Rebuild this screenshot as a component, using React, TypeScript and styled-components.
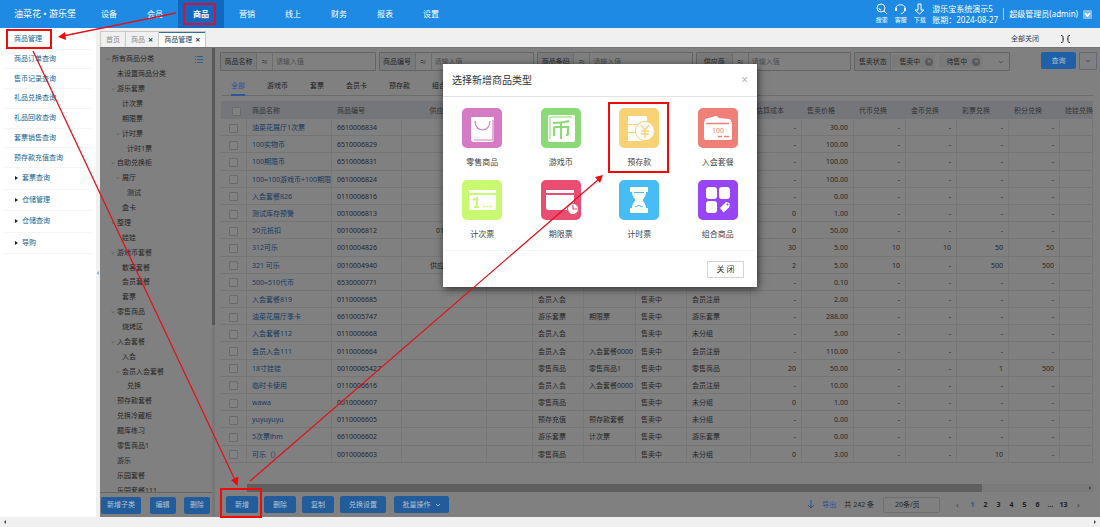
import React from "react";
import styled, { createGlobalStyle } from "styled-components";

const Global = createGlobalStyle`
  *, *::before, *::after { box-sizing: border-box; }
  html, body, #root { height: 100%; }
  body { margin: 0; background: #fff; font: 7px/10px "Noto Sans", "Noto Sans CJK SC", sans-serif; color: #262626; }
  button, input, select { font: inherit; color: inherit; margin: 0; padding: 0; }
  button { border: 0; background: none; white-space: nowrap; cursor: pointer; }
  ul { list-style: none; margin: 0; padding: 0; }
  a { color: inherit; text-decoration: none; white-space: nowrap; }
  svg { display: block; flex: none; }
`;

const Page = styled.div`
  position: relative;
  height: 100vh;
  display: flex;
  flex-direction: column;
  overflow: hidden;
`;

/* ---------- top bar ---------- */
const TopBar = styled.header`
  flex: none;
  height: 28px;
  display: flex;
  align-items: center;
  background: #1e8ae3;
  color: #fff;
  white-space: nowrap;
`;
const Brand = styled.div`
  width: 86px;
  padding-left: 14px;
  font-size: 9px;
`;
const Nav = styled.nav`
  display: flex;
  align-self: stretch;
`;
const NavLink = styled.a<{ $active?: boolean }>`
  width: 46px;
  display: flex;
  align-items: center;
  justify-content: center;
  font-size: 8px;
  font-weight: ${(p) => (p.$active ? 700 : 400)};
  background: ${(p) => (p.$active ? "#1069c0" : "transparent")};
`;
const TopRight = styled.div`
  margin-left: auto;
  padding-right: 8px;
  display: flex;
  align-items: center;
`;
const Tool = styled.button`
  width: 19px;
  display: flex;
  flex-direction: column;
  align-items: center;
  gap: 1px;
  font-size: 6px;
  line-height: 9px;
`;
const Account = styled.div`
  margin-left: 3px;
  width: 71px;
  font-size: 8px;
  line-height: 11px;
`;
const User = styled.button`
  display: flex;
  align-items: center;
  gap: 5px;
  height: 12px;
  padding-left: 5px;
  border-left: 1px solid #a5d0f5;
  font-size: 8px;
`;

/* ---------- body frame ---------- */
const Body = styled.div`
  flex: 1;
  min-height: 0;
  display: flex;
`;
const Side = styled.aside`
  flex: none;
  width: 96px;
  padding: 2px 5px 0;
  background: #fff;
`;
const SideList = styled.ul<{ $height: number }>`
  display: grid;
  grid-auto-rows: 1fr;
  height: ${(p) => p.$height}px;
`;
const SideItem = styled.li`
  display: flex;
  align-items: center;
  gap: 4px;
  padding-left: 9px;
  border-bottom: 1px solid #f4f4f4;
  color: #14638f;
`;
const Caret = styled.span`
  width: 0;
  height: 0;
  margin-left: 1px;
  border-left: 3px solid #222;
  border-top: 2px solid transparent;
  border-bottom: 2px solid transparent;
`;
const Splitter = styled.button`
  flex: none;
  width: 4px;
  background: #f0f0f0;
  display: flex;
  align-items: center;
  justify-content: center;
  color: #444;
`;
const Content = styled.div`
  flex: 1;
  min-width: 0;
  display: flex;
  flex-direction: column;
`;
const TabBar = styled.div`
  flex: none;
  height: 19px;
  display: flex;
  align-items: flex-end;
  background: #f0f0f0;
`;
const PageTab = styled.div<{ $active?: boolean }>`
  height: 16px;
  display: flex;
  align-items: center;
  gap: 3px;
  padding: 1px 5px 0;
  border: 1px solid #c9c9c9;
  border-bottom: 0;
  margin-right: -1px;
  background: ${(p) => (p.$active ? "#fff" : "#f0f0f0")};
  color: ${(p) => (p.$active ? "#1f3d55" : "#8b8b8b")};
  box-shadow: ${(p) => (p.$active ? "inset 0 1px 0 #2c7196" : "none")};
`;
const TabClose = styled.button`
  height: 10px;
  color: #24455f;
  font-size: 9px;
  font-weight: 700;
`;
const TabTools = styled.div`
  margin-left: auto;
  height: 16px;
  width: 89px;
  display: flex;
  align-items: center;
  gap: 22px;
  color: #1f3d55;
`;
const Workspace = styled.div`
  position: relative;
  flex: 1;
  min-height: 0;
  display: flex;
  background: #808080;
  border-top: 1px solid #747474;
`;

/* ---------- category tree ---------- */
const TreePanel = styled.section`
  flex: none;
  width: 112px;
  display: flex;
  flex-direction: column;
`;
const TreeScroll = styled.div`
  flex: 1;
  min-height: 0;
  overflow: hidden;
  padding-top: 4px;
`;
const TreeList = styled.ul`
  display: grid;
  grid-auto-rows: 1fr;
  height: 446px;
`;
const TreeRow = styled.li<{ $level: number }>`
  display: flex;
  align-items: center;
  padding-left: ${(p) => 6 + p.$level * 5}px;
  padding-right: 9px;
  white-space: nowrap;
  & > svg:last-child { margin-left: auto; }
`;
const Toggle = styled.span`
  width: 6px;
`;
const TreeButtons = styled.div`
  flex: none;
  height: 25px;
  padding: 0 2px 0 1px;
  border-top: 1px solid #666;
  display: flex;
  align-items: center;
  justify-content: space-between;
`;
const Action = styled.button<{ $width: number }>`
  width: ${(p) => p.$width}px;
  height: 17px;
  border-radius: 2px;
  background: #235c9a;
  color: #b4c2d2;
  display: flex;
  align-items: center;
  justify-content: center;
  gap: 4px;
`;
const TreeBar = styled.div`
  flex: none;
  width: 3px;
  background: #777;
`;
const TreeThumb = styled.div`
  height: 59%;
  background: #585858;
`;

/* ---------- main panel ---------- */
const Main = styled.main`
  flex: 1;
  min-width: 0;
  display: flex;
  flex-direction: column;
`;
const Filters = styled.form`
  flex: none;
  display: flex;
  gap: 3px;
  padding: 4px 3px 0 5px;
`;
const Field = styled.div`
  flex: 1 1 156px;
  min-width: 0;
  height: 19px;
  display: flex;
  align-items: stretch;
  border: 1px solid #656565;
  border-radius: 1px;
`;
const FieldLabel = styled.label`
  flex: none;
  width: 36px;
  display: flex;
  align-items: center;
  justify-content: center;
  background: #797a7c;
  border-right: 1px solid #6d6d6d;
`;
const Operator = styled.span`
  flex: none;
  width: 16px;
  text-align: center;
  line-height: 17px;
  border-right: 1px solid #6d6d6d;
`;
const FieldInput = styled.input`
  flex: 1;
  min-width: 0;
  padding-left: 3px;
  border: 0;
  background: transparent;
  outline: 0;
  &::placeholder { color: #4c4c4c; opacity: 1; }
`;
const Tags = styled.div`
  flex: 1;
  display: flex;
  align-items: center;
  gap: 4px;
  padding: 0 5px 0 1px;
  & > svg { margin-left: auto; }
`;
const Tag = styled.span`
  height: 13px;
  display: flex;
  align-items: center;
  gap: 5px;
  padding: 0 2px 0 7px;
  background: #7a7a7b;
`;
const TagClose = styled.button`
  width: 8px;
  height: 8px;
  border-radius: 4px;
  background: #5a5b5e;
  color: #8f8f8f;
  line-height: 8px;
`;
const Search = styled(Action)`
  flex: none;
  margin-left: 28px;
  background: #2060a8;
`;
const More = styled.button`
  flex: none;
  width: 18px;
  height: 18px;
  border: 1px solid #636a72;
  border-radius: 1px;
  display: flex;
  align-items: center;
  justify-content: center;
`;
const TypeTabs = styled.div`
  flex: none;
  height: 25px;
  margin: 0 7px 5px;
  padding-left: 9px;
  display: flex;
  align-items: stretch;
  gap: 22px;
  border-bottom: 1px solid #6c6c6c;
`;
const TypeTab = styled.button<{ $active?: boolean }>`
  margin-bottom: -1px;
  padding-top: 7px;
  color: ${(p) => (p.$active ? "#22549a" : "#1c1c1c")};
  border-bottom: 2px solid ${(p) => (p.$active ? "#2a579c" : "transparent")};
`;
const TableWrap = styled.div`
  flex: 1;
  min-height: 0;
  overflow: hidden;
  margin: 0 7px 0 6px;
`;
const Table = styled.table`
  width: 100%;
  table-layout: fixed;
  border-collapse: separate;
  border-spacing: 0;
  tbody { height: 344px; }
`;
const Th = styled.th<{ $align?: string }>`
  height: 18px;
  padding: 2px 0 0 5px;
  font-weight: 400;
  text-align: ${(p) => p.$align || "left"};
  white-space: nowrap;
  overflow: hidden;
  background: #75767a;
  color: #333;
`;
const Td = styled.td<{ $align?: string; $link?: boolean }>`
  padding: ${(p) => (p.$align === "center" ? "2px 0 0" : "2px 5px 0")};
  ${(p) => p.$link && "padding-right: 0;"}
  text-align: ${(p) => p.$align || "left"};
  color: ${(p) => (p.$link ? "#173a60" : "#262626")};
  border-right: 1px solid #777;
  border-bottom: 1px solid #757575;
  white-space: nowrap;
  overflow: hidden;
`;
const Check = styled.input`
  appearance: none;
  display: block;
  width: 9px;
  height: 9px;
  margin: 0 auto;
  border: 1px solid #6c6c6c;
  border-radius: 1px;
  background: #828282;
`;
const HBar = styled.div`
  flex: none;
  height: 8px;
  margin: 0 6px 0 32px;
  display: flex;
  align-items: center;
  justify-content: space-between;
  background: #7a7a7a;
  padding-right: 2px;
`;
const HThumb = styled.div`
  width: 87%;
  height: 8px;
  background: #5f5f5f;
`;
const Footer = styled.footer`
  flex: none;
  height: 25px;
  padding: 0 15px 0 11px;
  display: flex;
  align-items: center;
  gap: 6px;
  white-space: nowrap;
`;
const Batch = styled(Action)`
  margin-left: 2px;
`;
const Export = styled.button`
  margin-left: auto;
  display: flex;
  align-items: center;
  gap: 8px;
  color: #22549a;
`;
const Total = styled.span`
  margin: 0 3px 0 2px;
`;
const PageSize = styled.select`
  appearance: none;
  width: 57px;
  height: 16px;
  padding-left: 11px;
  border: 1px solid #6f6f6f;
  border-radius: 2px;
  background: transparent;
`;
const Pager = styled.nav`
  display: flex;
  align-items: center;
  margin-left: 5px;
  gap: 4px;
`;
const PageNo = styled.button<{ $active?: boolean }>`
  min-width: 9px;
  font-weight: 700;
  color: ${(p) => (p.$active ? "#22549a" : "#1c1c1c")};
`;
const PageStep = styled(PageNo)`
  margin: 0 2px;
  font-size: 9px;
  font-weight: 400;
  color: #444;
`;

/* ---------- dialog ---------- */
const DialogLayer = styled.div`
  position: absolute;
  inset: 0;
  display: flex;
  justify-content: center;
  align-items: flex-start;
  padding-top: 16px;
`;
const Dialog = styled.section`
  width: 314px;
  background: #fff;
  box-shadow: 1px 2px 8px rgba(0, 0, 0, 0.65);
`;
const DialogHead = styled.div`
  height: 33px;
  padding: 0 9px;
  display: flex;
  align-items: center;
  justify-content: space-between;
  border-bottom: 1px solid #e2e2e2;
`;
const DialogTitle = styled.h2`
  margin: 0;
  font-size: 10px;
  line-height: 14px;
  font-weight: 400;
  color: #333;
`;
const DialogClose = styled.button`
  font-size: 12px;
  color: #b5b5b5;
`;
const Types = styled.div`
  display: grid;
  grid-template-columns: repeat(4, 1fr);
  grid-auto-rows: 60px;
  row-gap: 12px;
  padding: 11px 0 10px;
`;
const TypeCard = styled.button`
  display: flex;
  flex-direction: column;
  align-items: center;
  gap: 8px;
  font-size: 8px;
  line-height: 12px;
  color: #444;
`;
const TypeIcon = styled.span<{ $color: string }>`
  width: 40px;
  height: 40px;
  border-radius: 5px;
  background: ${(p) => p.$color};
`;
const DialogFoot = styled.div`
  height: 37px;
  padding-right: 13px;
  display: flex;
  align-items: center;
  justify-content: flex-end;
  border-top: 1px solid #f4f4f4;
`;
const CloseButton = styled.button`
  width: 37px;
  height: 17px;
  border: 1px solid #d5d5d5;
  font-size: 8px;
  color: #333;
`;

/* ---------- page scrollbar and guide marks ---------- */
const PageBar = styled.div`
  flex: none;
  height: 10px;
  padding: 0 3px;
  display: flex;
  align-items: center;
  justify-content: space-between;
  background: #f0f0f0;
`;
const Guide = styled.svg`
  position: absolute;
  left: 0;
  top: 0;
  pointer-events: none;
`;

const Arrow = ({ left }: { left?: boolean }) => (
  <svg width="4" height="6" viewBox="0 0 4 6">
    <path d={left ? "M3 1v4L1 3z" : "M1 1v4l2-2z"} fill="#444" />
  </svg>
);
const Chevron = ({ color, size = 6 }: { color: string; size?: number }) => (
  <svg width={size} height={size} viewBox="0 0 6 6" fill="none" stroke={color}>
    <path d="M1 2l2 2 2-2" />
  </svg>
);

const navItems = ["设备", "会员", "商品", "营销", "线上", "财务", "报表", "设置"];
const sideLinks = ["商品管理", "商品订单查询", "售币记录查询", "礼品兑换查询", "礼品回收查询", "套票销售查询", "预存款充值查询"];
const sideGroups = ["套票查询", "仓储管理", "仓储查询", "导购"];

/* name, indent level, has children */
const tree: [string, number, boolean][] = [
  ["所有商品分类", 0, true], ["未设置商品分类", 1, false], ["游乐套票", 1, true], ["计次票", 2, false],
  ["期限票", 2, false], ["计时票", 2, true], ["计时1票", 3, false], ["自助兑换柜", 1, true],
  ["展厅", 2, true], ["测试", 3, false], ["盒卡", 2, false], ["整理", 1, true], ["娃娃", 2, false],
  ["游戏币套餐", 1, true], ["散客套餐", 2, false], ["会员套餐", 2, false], ["套票", 2, false],
  ["零售商品", 1, true], ["烧烤区", 2, false], ["入会套餐", 1, true], ["入会", 2, false],
  ["会员入会套餐", 2, true], ["兑换", 3, false], ["预存款套餐", 1, false], ["兑换冷藏柜", 1, false],
  ["题库练习", 1, false], ["零售商品1", 1, false], ["游乐", 1, false], ["乐园套餐", 1, false],
  ["乐园套餐111", 1, false],
];

/* title, width, alignment of values; the last column takes what is left */
const columns: [string, number | null, string][] = [
  ["商品名称", 85, "left"], ["商品编号", 70, "left"], ["供应商名称", 85, "center"], ["", 46, "left"],
  ["", 51, "left"], ["", 52, "left"], ["", 51, "left"], ["", 64, "left"],
  ["估算成本", 51, "right"], ["售卖价格", 52, "right"], ["代币兑换", 52, "right"], ["金币兑换", 51, "right"],
  ["彩票兑换", 52, "right"], ["积分兑换", 51, "right"], ["娃娃兑换", null, "right"],
];

const D = "-";
const row = (name: string, code: string, supplier: string, type: string, cat: string, group: string, cost: string, price: string, ex: string[] = [D, D, D, D]) =>
  [name, code, supplier, "", type, cat, type && "售卖中", group, cost, price, ...ex, ""];
const rows = [
  row("油菜花展厅1次票", "6610006834", "", "", "", "", D, "30.00"),
  row("100实物币", "6510006829", "", "", "", "", D, "100.00"),
  row("100期限币", "6510006831", "", "", "", "", D, "100.00"),
  row("100=100游戏币+100期限", "0610006824", "", "", "", "", D, "100.00"),
  row("入会套餐826", "0110006816", "", "", "", "", D, "0.00"),
  row("测试库存预警", "0010006813", "", "", "", "", "0", "1.00"),
  row("50元抵扣", "0010006812", "0101", "", "", "", "0", "50.00"),
  row("312可乐", "0010004826", "", "", "", "", "30", "5.00", ["10", "10", "50", "50"]),
  row("321 可乐", "0010004940", "供应商一", "", "", "", "2", "5.00", ["10", D, "500", "500"]),
  row("500=510代币", "6530000771", "", "", "", "", D, "0.10"),
  row("入会套餐819", "0110006685", "", "会员入会", "", "会员注册", D, "2.00"),
  row("油菜花展厅季卡", "6610005747", "", "游乐套票", "期限票", "游乐套票", D, "288.00"),
  row("入会套餐112", "0110006668", "", "会员入会", "", "未分组", D, "5.00"),
  row("会员入会111", "0110006664", "", "会员入会", "入会套餐0000", "会员注册", D, "110.00"),
  row("18寸娃娃", "00100065427", "", "零售商品", "零售商品1", "零售商品", "20", "50.00", [D, D, "1", "500"]),
  row("临时卡使用", "0110006616", "", "会员入会", "入会套餐0000", "会员注册", D, "10.00"),
  row("wawa", "0010006607", "", "零售商品", "", "未分组", "0", "1.00"),
  row("yuyuyuyu", "0110006605", "", "预存充值", "预存款套餐", "未分组", D, "0.00"),
  row("5次票lhm", "6610006602", "", "游乐套票", "计次票", "游乐套票", D, "0.00"),
  row("可乐（）", "0010006603", "", "零售商品", "", "未分组", "0", "3.00", [D, D, "10", D]),
];

const types: [string, string, React.ReactNode][] = [
  ["零售商品", "#d57bc6", <>
    <path d="M9 10q0-1 1-1h21q1 0 1 1v21q0 3-3 3H12q-3 0-3-3z" fill="#fff" />
    <path d="M13 13c0 12 15 12 15 0M12 32h19V12" fill="none" stroke="#d57bc6" strokeWidth="1.2" />
  </>],
  ["游戏币", "#8cd978", <>
    <rect x="7" y="7" width="27" height="27" rx="2" fill="#fff" />
    <path d="M9 31V9h22" fill="none" stroke="#8cd978" />
    <path d="M12 15q9 0 16-2M13 19v9M13 19h14v7q0 1-2 1M20 14v17" fill="none" stroke="#8cd978" strokeWidth="2.2" />
  </>],
  ["预存款", "#fad276", <>
    <path d="M9 8h17q2 0 2 2v6H9zM9 17h10v7H9zM9 25h10q1 5 5 8H9z" fill="#fff" />
    <circle cx="26" cy="23" r="9.5" fill="#fff" stroke="#fad276" />
    <path d="M22 17l4 5 4-5M26 22v8M22 23h8M22 26h8" fill="none" stroke="#fad276" strokeWidth="1.3" />
  </>],
  ["入会套餐", "#ef8078", <>
    <path d="M6 15l1-4 11-3q2 0 3 2l10 1q2 0 2 3h1v16q0 2-2 2H8q-2 0-2-2z" fill="#fff" />
    <path d="M8 15.500h23M20 28.500h4M26 28.500h5" stroke="#ef8078" strokeWidth="1.400" />
    <text x="14" y="25" fontSize="7" fill="#ef8078">100</text>
  </>],
  ["计次票", "#c9f873", <>
    <path d="M7 10h27v3H7zM7 15h27v13q0 2-2 2H9q-2 0-2-2z" fill="#fff" />
    <path d="M11 20l4-2v9M12 27h5" fill="none" stroke="#c9f873" strokeWidth="2" />
    <path d="M21 26.500h9" stroke="#c9f873" strokeWidth="1.500" strokeDasharray="2 1.300" />
  </>],
  ["期限票", "#e94d71", <>
    <path d="M5 10h28v3H5zM5 15h28v13q0 2-2 2H7q-2 0-2-2z" fill="#fff" />
    <circle cx="32" cy="29" r="5.500" fill="#fff" stroke="#e94d71" />
    <path d="M32 25v4h4" fill="none" stroke="#e94d71" strokeWidth="1.200" />
  </>],
  ["计时票", "#48bcf4", <>
    <path d="M11 7h18v5H11zM11 28h18v5H11z" fill="#fff" />
    <path d="M13 12h14c0 5-3 6-3 8s3 4 3 8H13c0-4 3-6 3-8s-3-3-3-8z" fill="#fff" />
    <path d="M15 12.500h10M16 27l4-1.500 4 1.500" stroke="#48bcf4" fill="none" />
  </>],
  ["组合商品", "#9745f5", <>
    <rect x="8" y="7" width="11" height="12" rx="3" fill="#fff" />
    <rect x="21" y="7" width="11" height="12" rx="3" fill="#fff" />
    <rect x="8" y="21" width="11" height="12" rx="3" fill="#fff" />
    <path d="M22 28l6-6 3.500 1v4l-6 5.500z" fill="#fff" />
    <circle cx="29.500" cy="24.500" r="1" fill="#9745f5" />
  </>],
];

function TopHeader() {
  return (
    <TopBar>
      <Brand>油菜花 • 游乐堡</Brand>
      <Nav>
        {navItems.map((n) => (
          <NavLink href="#" key={n} $active={n === "商品"}>{n}</NavLink>
        ))}
      </Nav>
      <TopRight>
        <Tool>
          <svg width="13" height="12" viewBox="0 0 13 12" fill="none" stroke="#fff"><circle cx="6" cy="5" r="4" /><path d="M9 8l3 3M4 5q0 2 2 2" /></svg>
          搜索
        </Tool>
        <Tool>
          <svg width="13" height="12" viewBox="0 0 13 12" fill="none" stroke="#fff"><path d="M2 7C0 0 13 0 11 7q-1 3-4 4" /><path d="M2 5v3M11 5v3" strokeWidth="2" /></svg>
          客服
        </Tool>
        <Tool>
          <svg width="13" height="12" viewBox="0 0 13 12" fill="none" stroke="#fff"><path d="M5 1h3v6h3l-4.500 4L2 7h3z" /></svg>
          下载
        </Tool>
        <Account>
          <div>游乐宝系统演示5</div>
          <div>账期：2024-08-27</div>
        </Account>
        <User>
          超级管理员(admin)
          <svg width="9" height="9" viewBox="0 0 9 9"><rect width="9" height="9" rx="1" fill="#7fb9ee" /><path d="M2 3l2.500 3L7 3" fill="none" stroke="#fff" strokeWidth="1.500" /></svg>
        </User>
      </TopRight>
    </TopBar>
  );
}

function CategoryTree() {
  return (
    <TreePanel>
      <TreeScroll>
        <TreeList>
          {tree.map(([name, level, open], i) => (
            <TreeRow key={name} $level={level}>
              <Toggle>{open && <Chevron color="#505050" size={4} />}</Toggle>
              {name}
              {i === 0 && (
                <svg width="8" height="7" viewBox="0 0 8 7" stroke="#2f5f93"><path d="M0 .5h1M2 .5h6M0 3.500h1M2 3.500h6M0 6.500h1M2 6.500h6" /></svg>
              )}
            </TreeRow>
          ))}
        </TreeList>
      </TreeScroll>
      <TreeButtons>
        <Action $width={40}>新增子类</Action>
        <Action $width={26}>编辑</Action>
        <Action $width={26}>删除</Action>
      </TreeButtons>
    </TreePanel>
  );
}

function FilterBar() {
  return (
    <Filters>
      {["商品名称", "商品编号", "商品条码", "供应商"].map((f) => (
        <Field key={f}>
          <FieldLabel htmlFor={f}>{f}</FieldLabel>
          <Operator>≈</Operator>
          <FieldInput id={f} placeholder="请输入值" />
        </Field>
      ))}
      <Field>
        <FieldLabel as="span">售卖状态</FieldLabel>
        <Tags>
          {["售卖中", "待售中"].map((t) => (
            <Tag key={t}>{t}<TagClose type="button" aria-label="移除">×</TagClose></Tag>
          ))}
          <Chevron color="#5a5a5a" />
        </Tags>
      </Field>
      <Search $width={35} type="button">查询</Search>
      <More type="button" aria-label="更多"><Chevron color="#4b5560" /></More>
    </Filters>
  );
}

function ProductTable() {
  return (
    <TableWrap>
      <Table>
        <colgroup>
          <col style={{ width: 26 }} />
          {columns.map(([, w], i) => <col key={i} style={w ? { width: w } : undefined} />)}
        </colgroup>
        <thead>
          <tr>
            <Th $align="center"><Check type="checkbox" aria-label="全选" /></Th>
            {columns.map(([name, , align], i) => (
              <Th key={i} $align={align === "center" ? "center" : "left"}>{name}</Th>
            ))}
          </tr>
        </thead>
        <tbody>
          {rows.map((r) => (
            <tr key={r[1]}>
              <Td $align="center"><Check type="checkbox" aria-label={r[0]} /></Td>
              {r.map((v, i) => (
                <Td key={i} $align={columns[i][2]} $link={i === 0}>{i === 0 ? <a href="#">{v}</a> : v}</Td>
              ))}
            </tr>
          ))}
        </tbody>
      </Table>
    </TableWrap>
  );
}

function TypeDialog() {
  return (
    <DialogLayer>
      <Dialog role="dialog" aria-labelledby="type-title">
        <DialogHead>
          <DialogTitle id="type-title">选择新增商品类型</DialogTitle>
          <DialogClose aria-label="关闭">×</DialogClose>
        </DialogHead>
        <Types>
          {types.map(([name, color, art]) => (
            <TypeCard key={name}>
              <TypeIcon $color={color}><svg width="40" height="40" viewBox="0 0 40 40">{art}</svg></TypeIcon>
              {name}
            </TypeCard>
          ))}
        </Types>
        <DialogFoot><CloseButton>关 闭</CloseButton></DialogFoot>
      </Dialog>
    </DialogLayer>
  );
}

function GuideMarks() {
  return (
    <Guide width="1100" height="527" viewBox="0 0 1100 527" fill="none">
      <g stroke="#f00a0a" strokeWidth="2">
        <rect x="184" y="4" width="31" height="20" stroke="#d2143c" />
        <rect x="7" y="30" width="44" height="18" />
        <rect x="221" y="489" width="40" height="28" />
        <rect x="609" y="103" width="59" height="69" />
      </g>
      <g stroke="#e0141c" strokeWidth="1.300">
        <path d="M176 13L63 36M33 51l202 429M250 481L599 179" />
      </g>
      <path d="M58 37l7-5 1 8zM237.500 486l-6.500-6 7.500-3.500zM603 175l-3 8-5-6z" fill="#f00a0a" />
    </Guide>
  );
}

export default function App() {
  return (
    <Page>
      <Global />
      <TopHeader />
      <Body>
        <Side>
          <SideList $height={138}>
            {sideLinks.map((s) => <SideItem key={s}><a href="#">{s}</a></SideItem>)}
          </SideList>
          <SideList $height={86}>
            {sideGroups.map((s) => <SideItem key={s}><Caret /><a href="#">{s}</a></SideItem>)}
          </SideList>
        </Side>
        <Splitter aria-label="收起">‹</Splitter>
        <Content>
          <TabBar>
            <PageTab>首页</PageTab>
            <PageTab>商品<TabClose aria-label="关闭商品">×</TabClose></PageTab>
            <PageTab $active>商品管理<TabClose aria-label="关闭商品管理">×</TabClose></PageTab>
            <TabTools>
              <a href="#">全部关闭</a>
              <svg width="9" height="8" viewBox="0 0 9 8" fill="none" stroke="#333"><path d="M0 .5q2 0 2 1v5q0 1-2 1M2 4h1M9 .5q-2 0-2 1v5q0 1 2 1M7 4H6" /></svg>
            </TabTools>
          </TabBar>
          <Workspace>
            <CategoryTree />
            <TreeBar><TreeThumb /></TreeBar>
            <Main>
              <FilterBar />
              <TypeTabs>
                {["全部", "游戏币", "套票", "会员卡", "预存款", "组合"].map((t) => (
                  <TypeTab key={t} $active={t === "全部"}>{t}</TypeTab>
                ))}
              </TypeTabs>
              <ProductTable />
              <HBar><HThumb /><Arrow /></HBar>
              <Footer>
                <Action $width={32}>新增</Action>
                <Action $width={32}>删除</Action>
                <Action $width={32}>复制</Action>
                <Action $width={46}>兑换设置</Action>
                <Batch $width={55}>批量操作<Chevron color="#9fb4cc" /></Batch>
                <Export>
                  <svg width="6" height="9" viewBox="0 0 6 9" fill="none" stroke="#22549a"><path d="M3 0v8M0 5l3 3 3-3" /></svg>
                  导出
                </Export>
                <Total>共 242 条</Total>
                <PageSize aria-label="每页条数"><option>20条/页</option></PageSize>
                <Pager>
                  <PageStep aria-label="上一页">‹</PageStep>
                  {["1", "2", "3", "4", "5", "6", "...", "13"].map((n) => (
                    <PageNo key={n} $active={n === "1"}>{n}</PageNo>
                  ))}
                  <PageStep aria-label="下一页">›</PageStep>
                </Pager>
              </Footer>
            </Main>
            <TypeDialog />
          </Workspace>
        </Content>
      </Body>
      <PageBar><Arrow left /><Arrow /></PageBar>
      <GuideMarks />
    </Page>
  );
}
